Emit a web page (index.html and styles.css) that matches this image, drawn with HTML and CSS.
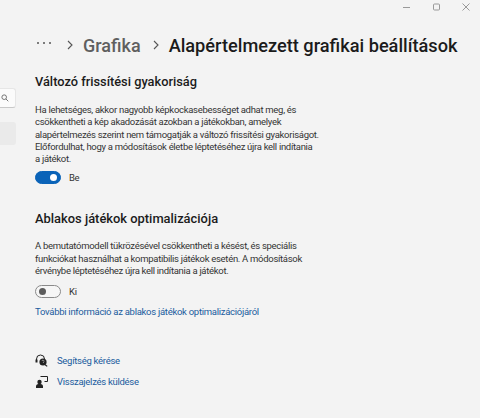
FILE: index.html
```html
<!DOCTYPE html>
<html lang="hu">
<head>
    <meta charset="UTF-8">
    <meta name="viewport" content="width=device-width, initial-scale=1.0">
    <title>Alapértelmezett grafikai beállítások</title>
    <link rel="stylesheet" href="styles.css">
</head>
<body>
    <div class="window-controls">
        <svg width="10" height="10" viewBox="0 0 10 10"><path d="M2 5.5h7" stroke="#999" fill="none"/></svg>
        <svg width="10" height="10" viewBox="0 0 10 10"><rect x="2.5" y="2" width="6" height="6" rx="1" stroke="#999" fill="none"/></svg>
        <svg width="10" height="10" viewBox="0 0 10 10"><path d="M1.5 1.5l7 7M8.5 1.5l-7 7" stroke="#999" fill="none"/></svg>
    </div>
    <div class="layout">
        <div class="sidebar">
            <div class="search">
                <svg width="8" height="8" viewBox="0 0 9 9"><circle cx="3.6" cy="3.6" r="2.6" stroke="#666" fill="none"/><path d="M5.6 5.6l2.6 2.6" stroke="#666" fill="none"/></svg>
            </div>
            <div class="nav-selected"></div>
        </div>
        <div class="main">
            <div class="breadcrumb">
                <svg class="dots" width="16" height="10" viewBox="0 0 16 10"><circle cx="2" cy="3" r="1" fill="#555"/><circle cx="8" cy="3" r="1" fill="#555"/><circle cx="14" cy="3" r="1" fill="#555"/></svg>
                <svg class="chevron first" width="8" height="10" viewBox="0 0 8 10"><path d="M2 1l4 4-4 4" stroke="#555" stroke-width="1.1" fill="none"/></svg>
                <span class="crumb-parent">Grafika</span>
                <svg class="chevron" width="8" height="10" viewBox="0 0 8 10"><path d="M2 1l4 4-4 4" stroke="#555" stroke-width="1.1" fill="none"/></svg>
                <span class="crumb-current">Alapértelmezett grafikai beállítások</span>
            </div>

            <h2 class="heading">Változó frissítési gyakoriság</h2>
            <p class="text">Ha lehetséges, akkor nagyobb képkockasebességet adhat meg, és<br>csökkentheti a kép akadozását azokban a játékokban, amelyek<br>alapértelmezés szerint nem támogatják a változó frissítési gyakoriságot.<br>Előfordulhat, hogy a módosítások életbe léptetéséhez újra kell indítania<br>a játékot.</p>
            <div class="toggle-row">
                <span class="toggle on"><span class="knob"></span></span>
                <span class="toggle-label">Be</span>
            </div>

            <h2 class="heading second">Ablakos játékok optimalizációja</h2>
            <p class="text second-text">A bemutatómodell tükrözésével csökkentheti a késést, és speciális<br>funkciókat használhat a kompatibilis játékok esetén. A módosítások<br>érvénybe léptetéséhez újra kell indítania a játékot.</p>
            <div class="toggle-row off-row">
                <span class="toggle"><span class="knob"></span></span>
                <span class="toggle-label">Ki</span>
            </div>
            <a class="link more" href="#">További információ az ablakos játékok optimalizációjáról</a>

            <div class="help-links">
                <div class="help-row">
                    <svg width="14" height="14" viewBox="0 0 14 14"><path d="M1.5 7.5V5a4 4 0 0 1 8 0" stroke="#222" fill="none"/><rect x="0.5" y="5.5" width="2" height="3" fill="#222"/><circle cx="8" cy="8" r="3.6" fill="#222"/><path d="M10.2 10.8l2 1.6" stroke="#222" stroke-width="1.2"/><path d="M7 7a1 1 0 1 1 1.4 1.1V9" stroke="#bbb" stroke-width="0.7" fill="none"/></svg>
                    <a class="link" href="#">Segítség kérése</a>
                </div>
                <div class="help-row">
                    <svg width="14" height="14" viewBox="0 0 14 14"><path d="M5.5 1.5h7v5h-3" stroke="#222" fill="none"/><circle cx="4.5" cy="7" r="2.2" fill="#222"/><path d="M1 13v-1.5a2.5 2.5 0 0 1 2.5-2.5h2a2.5 2.5 0 0 1 2.5 2.5V13z" fill="#222"/></svg>
                    <a class="link" href="#">Visszajelzés küldése</a>
                </div>
            </div>
        </div>
    </div>
</body>
</html>
```

FILE: styles.css
```css
html, body {
    height: 100%;
}

body {
    margin: 0;
    background-color: #f3f3f3;
    font-family: Roboto, "Noto Sans", sans-serif;
    color: #1b1b1b;
    overflow: hidden;
}

.window-controls {
    display: flex;
    justify-content: flex-end;
    gap: 20px;
    height: 14px;
    padding: 2px 9px 0 0;
}

.layout {
    display: flex;
}

.sidebar {
    width: 16px;
    flex-shrink: 0;
    padding-top: 72px;
}

.search {
    display: flex;
    align-items: center;
    height: 18px;
    padding-left: 1px;
    background-color: #fbfbfb;
    border: 1px solid #e6e6e6;
    border-left: none;
    border-bottom-color: #c8c8c8;
    border-radius: 0 3px 3px 0;
}

.nav-selected {
    height: 23px;
    margin-top: 14px;
    background-color: #eaeaea;
    border-radius: 0 3px 3px 0;
}

.main {
    flex: 1;
    padding-left: 19px;
}

.breadcrumb {
    display: flex;
    align-items: center;
    height: 30px;
    margin-top: 14px;
}

.dots {
    flex-shrink: 0;
    margin-left: 1px;
}

.chevron {
    flex-shrink: 0;
}

.chevron.first {
    margin-left: 14px;
}

.crumb-parent {
    margin: 0 11px 0 9px;
    font-size: 18px;
    font-weight: 500;
    color: #5f5f5f;
}

.crumb-current {
    margin-left: 9px;
    font-size: 18.2px;
    font-weight: 500;
    white-space: nowrap;
}

.heading {
    margin: 13px 0 0;
    font-size: 12.8px;
    line-height: 18px;
    font-weight: 500;
}

.heading.second {
    margin-top: 26px;
    font-size: 12.9px;
}

.text {
    margin: 13px 0 0;
    font-size: 9.5px;
    line-height: 12.25px;
    letter-spacing: -0.3px;
    color: #333;
    white-space: nowrap;
}

.text.second-text {
    margin-top: 12px;
}

.toggle-row {
    display: flex;
    align-items: center;
    gap: 8px;
    margin-top: 5px;
    height: 14px;
}

.toggle-row.off-row {
    margin-top: 7px;
}

.toggle {
    display: flex;
    align-items: center;
    width: 26px;
    height: 13px;
    padding: 0 3px;
    box-sizing: border-box;
    border: 1px solid #8a8a8a;
    border-radius: 7px;
    background-color: #f6f6f6;
}

.toggle .knob {
    width: 7px;
    height: 7px;
    border-radius: 50%;
    background-color: #5c5c5c;
}

.toggle.on {
    justify-content: flex-end;
    background-color: #0a63b8;
    border-color: #0a63b8;
}

.toggle.on .knob {
    background-color: #fff;
}

.toggle-label {
    font-size: 9.5px;
    letter-spacing: -0.3px;
    color: #333;
}

.link {
    font-size: 9.5px;
    line-height: 14px;
    letter-spacing: -0.28px;
    color: #1a5c9e;
    text-decoration: none;
}

.more {
    display: block;
    margin-top: 7px;
}

.help-links {
    display: flex;
    flex-direction: column;
    gap: 7px;
    margin-top: 35px;
}

.help-row {
    display: flex;
    align-items: center;
    gap: 8px;
    height: 14px;
}
```
